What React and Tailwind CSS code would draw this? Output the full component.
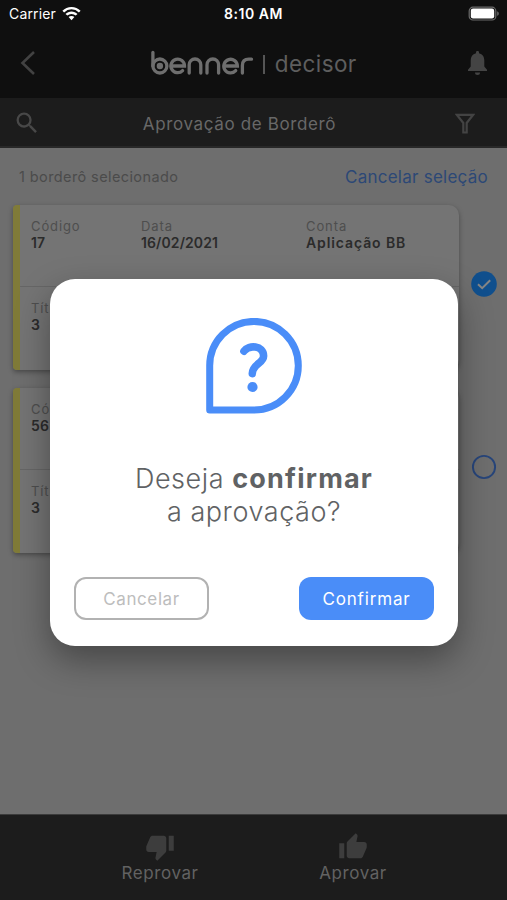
import { MdThumbDown, MdThumbUp, MdSearch } from "react-icons/md";

const borderos = [
  { codigo: "17", data: "16/02/2021", conta: "Aplicação BB", titulos: "3", selected: true },
  { codigo: "56", data: "16/02/2021", conta: "Aplicação BB", titulos: "3", selected: false },
];

const StatusBar = () => (
  <div className="relative h-[27px] shrink-0 flex items-center justify-between pl-[9px] pr-[7px] text-white">
    <div className="flex items-center gap-[6px]">
      <span className="text-[14px] leading-none tracking-[0.15px]">Carrier</span>
      <svg width="19" height="14" viewBox="0 0 19 14" fill="white">
        <path d="M9.5 0C13 0 16.2 1.4 18.6 3.7L16.9 5.4A10.5 10.5 0 0 0 2.1 5.4L.4 3.7C2.8 1.4 6 0 9.5 0Z" />
        <path d="M9.5 4.5C11.8 4.5 13.9 5.4 15.5 6.9L13.7 8.6A6.1 6.1 0 0 0 5.3 8.6L3.5 6.9C5.1 5.4 7.2 4.5 9.5 4.5Z" />
        <path d="M9.5 9C10.6 9 11.6 9.4 12.4 10.1L9.5 13.2L6.6 10.1C7.4 9.4 8.4 9 9.5 9Z" />
      </svg>
    </div>
    <span className="absolute left-[224px] top-[7px] text-[14px] leading-none font-semibold tracking-[0.55px]">8:10 AM</span>
    <svg width="32" height="15" viewBox="0 0 32 15">
      <rect x="1.2" y="1.2" width="26.6" height="12.8" rx="3.8" fill="none" stroke="#6b6b6b" strokeWidth="1.2" />
      <rect x="2.8" y="2.6" width="23.4" height="9.8" rx="2.2" fill="white" />
      <path d="M29.2 5.2C31.3 6 31.3 9 29.2 9.8Z" fill="#6b6b6b" />
    </svg>
  </div>
);

const BennerLogo = () => (
  <svg width="104" height="26" viewBox="0 0 104 26" fill="none" stroke="#6e6e6e" strokeWidth="3.3" strokeLinecap="round">
    <path d="M2.9 2.5V16" />
    <circle cx="9.9" cy="16" r="7" />
    <circle cx="9.9" cy="16" r="3.2" fill="#6e6e6e" stroke="none" />
    <path d="M21.5 16H34.5A6.8 6.8 0 1 0 32.6 20.6" />
    <path d="M39.2 23V14.8A5.8 5.8 0 0 1 50.8 14.8V23" />
    <path d="M57 23V14.8A5.8 5.8 0 0 1 68.6 14.8V23" />
    <path d="M75 16H87.4A6.8 6.8 0 1 0 85.7 20.6" />
    <path d="M92.4 23V15.5Q92.4 9.2 98.8 9.2H101.5" />
  </svg>
);

const Header = () => (
  <div className="h-[71px] shrink-0 flex items-center justify-between pl-[20px] pr-[20px]">
    <svg width="16" height="26" viewBox="0 0 16 26" fill="none" stroke="#424242" strokeWidth="2.6">
      <path d="M14 2L2.5 13L14 24" />
    </svg>
    <div className="flex items-center pl-[3px]">
      <BennerLogo />
      <div className="ml-[9px] mt-[3px] h-[19px] w-[1.5px] bg-[#555]" />
      <span className="ml-[10px] pt-[3px] text-[22.5px] leading-none text-[#5e5e5e] tracking-[0.4px]">decisor</span>
    </div>
    <svg width="19" height="24" viewBox="0 0 19 24" fill="#444">
      <path d="M8 2.2V1.4A1.5 1.5 0 0 1 11 1.4V2.2C14.6 3 16.3 5.8 16.3 9.4V15.6L19 18.7V20H0V18.7L2.7 15.6V9.4C2.7 5.8 4.4 3 8 2.2Z" />
      <path d="M7 21.5H12A2.5 2.5 0 0 1 7 21.5Z" />
    </svg>
  </div>
);

const TitleBar = () => (
  <div className="h-[50px] shrink-0 flex items-center justify-between bg-[#1c1c1c] border-b-2 border-[#282828] pl-[13px] pr-[32px] pt-[2px]">
    <MdSearch size={28} color="#484848" />
    <span className="text-[17px] text-[#686868] tracking-[0.63px] pt-[3px] pr-[17px]">Aprovação de Borderô</span>
    <svg width="20" height="21" viewBox="0 0 20 21" fill="none" stroke="#434343" strokeWidth="2.2">
      <path d="M1.8 1.8H18.2L11.7 10V19.5H8.3V10Z" />
    </svg>
  </div>
);

const Field = ({ label, value, valueClass = "tracking-[0.1px]" }) => (
  <div className="flex flex-col">
    <span className="text-[13px] leading-[17px] text-[#4e4e4e] tracking-[0.9px]">{label}</span>
    <span className={`text-[14px] leading-[16px] font-semibold text-[#2b2b2b] ${valueClass}`}>{value}</span>
  </div>
);

const BorderoCard = ({ item }) => (
  <div className="flex">
    <div className="w-[446px] h-[165px] flex rounded-[10px] rounded-l-[4px] bg-[#747474] overflow-hidden shadow-[0_2px_5px_rgba(0,0,0,0.35)]">
      <div className="w-[7px] bg-[#807b38]" />
      <div className="flex-1">
        <div className="h-[82px] grid grid-cols-[110px_165px_1fr] pl-[11px] pt-[13px] border-b border-[#666]">
          <Field label="Código" value={item.codigo} />
          <Field label="Data" value={item.data} />
          <Field label="Conta" value={item.conta} valueClass="tracking-[0.9px]" />
        </div>
        <div className="pl-[11px] pt-[13px]">
          <Field label="Títulos" value={item.titulos} />
        </div>
      </div>
    </div>
    <div className="flex-1 flex items-center pl-[12px] pb-[7px]">
      {item.selected ? (
        <svg width="26" height="26" viewBox="0 0 26 26">
          <circle cx="13" cy="13" r="12.8" fill="#104f8d" />
          <path d="M7 13.2L11.2 17.2L19.2 9.2" fill="none" stroke="#858585" strokeWidth="2" />
        </svg>
      ) : (
        <svg width="26" height="26" viewBox="0 0 26 26">
          <circle cx="13" cy="13" r="11.1" fill="none" stroke="#27457a" strokeWidth="1.9" />
        </svg>
      )}
    </div>
  </div>
);

const Footer = () => (
  <div className="h-[86px] shrink-0 flex justify-center bg-[#1c1c1c] border-t border-[#3b3b3b] pt-[17px] pl-[6px] text-[#626262]">
    <div className="w-[193px] flex flex-col items-center">
      <MdThumbDown size={30} color="#3d3d3d" />
      <span className="text-[17px] leading-[22px] tracking-[0.6px]">Reprovar</span>
    </div>
    <div className="w-[193px] flex flex-col items-center">
      <MdThumbUp size={30} color="#3d3d3d" />
      <span className="text-[17px] leading-[22px] tracking-[0.6px]">Aprovar</span>
    </div>
  </div>
);

const ConfirmDialog = () => (
  <div className="absolute left-[50px] top-[279px] w-[408px] h-[367px] flex flex-col items-center rounded-[25px] bg-white pt-[39px] shadow-[0_14px_34px_rgba(0,0,0,0.36)]">
    <svg width="96" height="96" viewBox="0 0 96 96" fill="none" stroke="#4a8df8" strokeWidth="7" strokeLinejoin="round" strokeLinecap="round">
      <path d="M3.7 92V48A44.3 44.3 0 1 1 48 92Z" />
      <path d="M38 33.2C42.5 26.6 57.6 27.2 57.6 38C57.6 45.5 46.3 46 46.3 55.6" strokeWidth="7.6" />
      <circle cx="46.5" cy="69" r="5.1" fill="#4a8df8" stroke="none" />
    </svg>
    <p className="mt-[48px] text-center text-[27px] leading-[33px] font-light text-[#606264] tracking-[0.55px]">
      Deseja <span className="font-bold tracking-[1.2px]">confirmar</span>
      <br />a aprovação?
    </p>
    <div className="mt-[49px] w-full flex justify-between px-[24px] text-[17px]">
      <button className="w-[135px] h-[43px] pt-[2px] rounded-[12px] border-2 border-[#b2b2b2] text-[#bdbdbd] tracking-[0.6px]">Cancelar</button>
      <button className="w-[135px] h-[43px] pt-[2px] rounded-[12px] bg-[#4a8df8] text-white tracking-[0.85px]">Confirmar</button>
    </div>
  </div>
);

export default function App() {
  return (
    <div className="relative w-[507px] h-[900px] flex flex-col overflow-hidden bg-[#0f0f0f] font-['Inter',sans-serif]">
      <StatusBar />
      <Header />
      <TitleBar />
      <main className="flex-1 bg-[#6e6e6e] pl-[13px]">
        <div className="h-[57px] flex items-center justify-between pl-[6px] pr-[19px]">
          <span className="text-[14.5px] text-[#4b4b4b] tracking-[0.4px]">1 borderô selecionado</span>
          <span className="pt-[3px] text-[17px] text-[#2c4876] tracking-[0.25px]">Cancelar seleção</span>
        </div>
        <div className="flex flex-col gap-[18px]">
          {borderos.map((item) => (
            <BorderoCard key={item.codigo} item={item} />
          ))}
        </div>
      </main>
      <Footer />
      <ConfirmDialog />
    </div>
  );
}
